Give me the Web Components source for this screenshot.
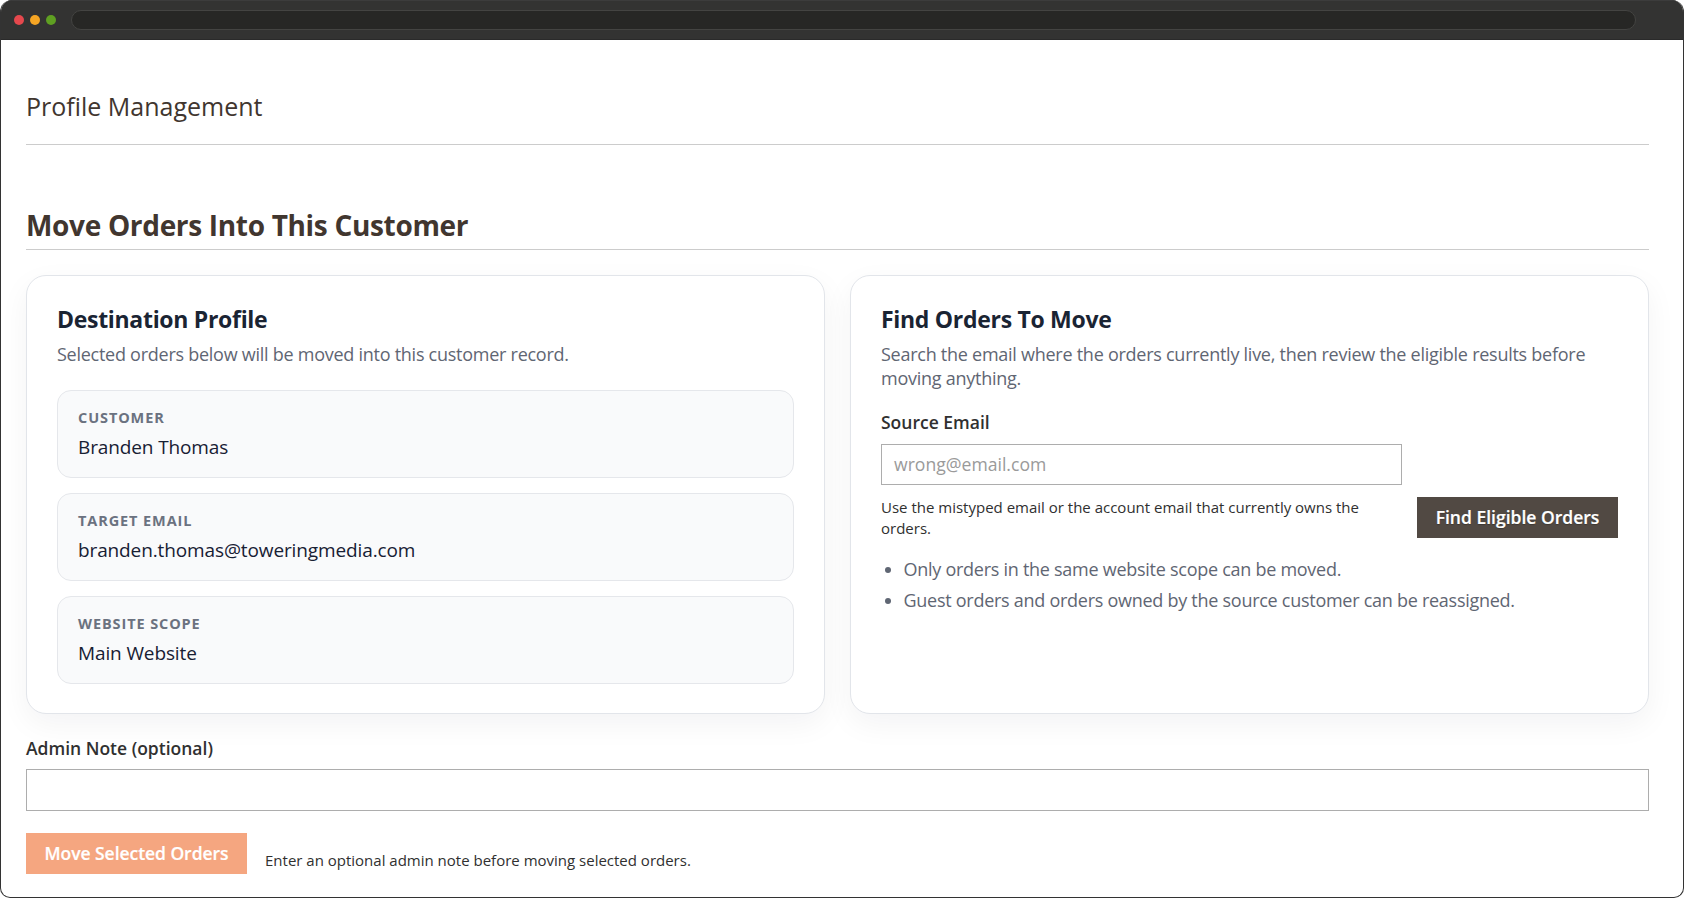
<!DOCTYPE html>
<html lang="en"><head><meta charset="utf-8"><title>Profile Management</title>
<style>
html,body{margin:0;padding:0;background:#fff}
body{font-family:"Open Sans","Noto Sans",sans-serif}
</style></head><body>
<app-window>
  <page-header>Profile Management</page-header>
  <section-title>Move Orders Into This Customer</section-title>
  <two-cols>
    <info-card heading="Destination Profile">
      <span slot="lead">Selected orders below will be moved into this customer record.</span>
      <fact-box label="Customer">Branden Thomas</fact-box>
      <fact-box label="Target Email">branden.thomas@toweringmedia.com</fact-box>
      <fact-box label="Website Scope">Main Website</fact-box>
    </info-card>
    <info-card heading="Find Orders To Move">
      <span slot="lead">Search the email where the orders currently live, then review the eligible results before moving anything.</span>
      <find-form></find-form>
    </info-card>
  </two-cols>
  <note-form></note-form>
</app-window>
<script>
function def(name, css, html){
  customElements.define(name, class extends HTMLElement{
    constructor(){super();this.attachShadow({mode:'open'});}
    connectedCallback(){ this.shadowRoot.innerHTML='<style>'+css+'</style>'+(typeof html==='function'?html(this):html); }
  });
}
def('app-window',`
 :host{display:block;box-sizing:border-box;width:1684px;height:898px;border:1px solid #333;border-top:0;border-radius:12px 12px 10px 10px;overflow:hidden;background:#fff}
 .bar{display:flex;align-items:center;gap:6px;height:40px;box-sizing:border-box;background:#333332;padding:0 48px 0 14px;margin:0 -1px;border-bottom:1px solid #2a2a2a;border-top:1px solid #3c3c3c}
 .dot{width:10px;height:10px;border-radius:50%}
 .url{flex:1;height:20px;box-sizing:border-box;margin-left:9px;border-radius:10px;background:#272725;border:1px solid #444442}
 .main{padding:0 34px 0 25px}
`,`<div class="bar"><span class="dot" style="background:#e5484d"></span><span class="dot" style="background:#f5a524"></span><span class="dot" style="background:#5fa022"></span><div class="url"></div></div><div class="main"><slot></slot></div>`);
def('page-header',`
 :host{display:block;height:105px;box-sizing:border-box;padding-top:49px;border-bottom:1px solid #ccc;font-size:25px;line-height:34px;font-weight:400;color:#41362f}
`,`<slot></slot>`);
def('section-title',`
 :host{display:block;margin-top:60px;height:45px;box-sizing:border-box;border-bottom:1px solid #ccc;font-size:28px;line-height:40px;font-weight:700;letter-spacing:-.32px;color:#41362f}
`,`<slot></slot>`);
def('two-cols',`
 :host{display:grid;grid-template-columns:1fr 1fr;gap:25px;margin-top:25px}
`,`<slot></slot>`);
def('info-card',`
 :host{display:block;box-sizing:border-box;height:439px;padding:28px 30px;border:1px solid #e2e5ea;border-radius:20px;background:#fff;box-shadow:0 10px 30px rgba(15,23,42,.05)}
 h3{margin:0;font-size:23px;line-height:30px;font-weight:700;letter-spacing:-.3px;color:#1a2433}
 p{margin:8px 0 0;font-size:18px;line-height:24px;letter-spacing:-.26px;color:#5f6673}
 .body{margin-top:24px;display:flex;flex-direction:column;gap:15px}
`,el=>`<h3>${el.getAttribute('heading')}</h3><p><slot name="lead"></slot></p><div class="body"><slot></slot></div>`);
def('fact-box',`
 :host{display:block;box-sizing:border-box;height:88px;padding:17px 20px 0;border:1px solid #e5e7eb;border-radius:14px;background:#f9fafb}
 .l{font-size:14.5px;line-height:20px;font-weight:700;letter-spacing:.9px;text-transform:uppercase;color:#6b7280}
 .v{margin-top:6px;font-size:19px;line-height:26px;letter-spacing:-.12px;color:#172033}
`,el=>`<div class="l">${el.getAttribute('label')}</div><div class="v"><slot></slot></div>`);
def('find-form',`
 :host{display:block;margin-top:-4px}
 label{display:block;font-size:17.5px;line-height:24px;font-weight:600;color:#303030}
 .inp{display:block;box-sizing:border-box;width:521px;height:41px;margin-top:10px;padding:0 12px;border:1px solid #adadad;font-size:17.6px;line-height:39px;color:#9a9a9a;background:#fff}
 .row{display:flex;align-items:flex-start;gap:20px;margin-top:12px}
 .hint{flex:1;font-size:15px;line-height:21px;color:#303030}
 .btn{width:201px;height:41px;flex:none;text-align:center;font-size:17.5px;line-height:41px;font-weight:600;-webkit-text-stroke:.2px #fff;color:#fff;background:#514943;text-shadow:0 1px 1px rgba(0,0,0,.25)}
 ul{margin:15px 0 0;padding:0 0 0 22.5px;font-size:18px;line-height:31px;letter-spacing:-.27px;color:#5f6673}
`,`<label>Source Email</label><div class="inp">wrong@email.com</div><div class="row"><div class="hint">Use the mistyped email or the account email that currently owns the orders.</div><div class="btn">Find Eligible Orders</div></div><ul><li>Only orders in the same website scope can be moved.</li><li>Guest orders and orders owned by the source customer can be reassigned.</li></ul>`);
def('note-form',`
 :host{display:block;margin-top:22px}
 label{display:block;font-size:17.5px;line-height:24px;font-weight:600;color:#303030}
 .inp{box-sizing:border-box;height:42px;margin-top:9px;border:1px solid #adadad;background:#fff}
 .row{display:flex;align-items:flex-end;gap:18px;margin-top:22px}
 .btn{width:221px;height:41px;text-align:center;font-size:17.5px;line-height:41px;font-weight:600;letter-spacing:-.05px;-webkit-text-stroke:.2px #fff;color:#fff;background:#f5a680}
 .hint{font-size:15px;line-height:20px;color:#303030;padding-bottom:4px}
`,`<label>Admin Note (optional)</label><div class="inp"></div><div class="row"><div class="btn">Move Selected Orders</div><div class="hint">Enter an optional admin note before moving selected orders.</div></div>`);
</script>
</body></html>
